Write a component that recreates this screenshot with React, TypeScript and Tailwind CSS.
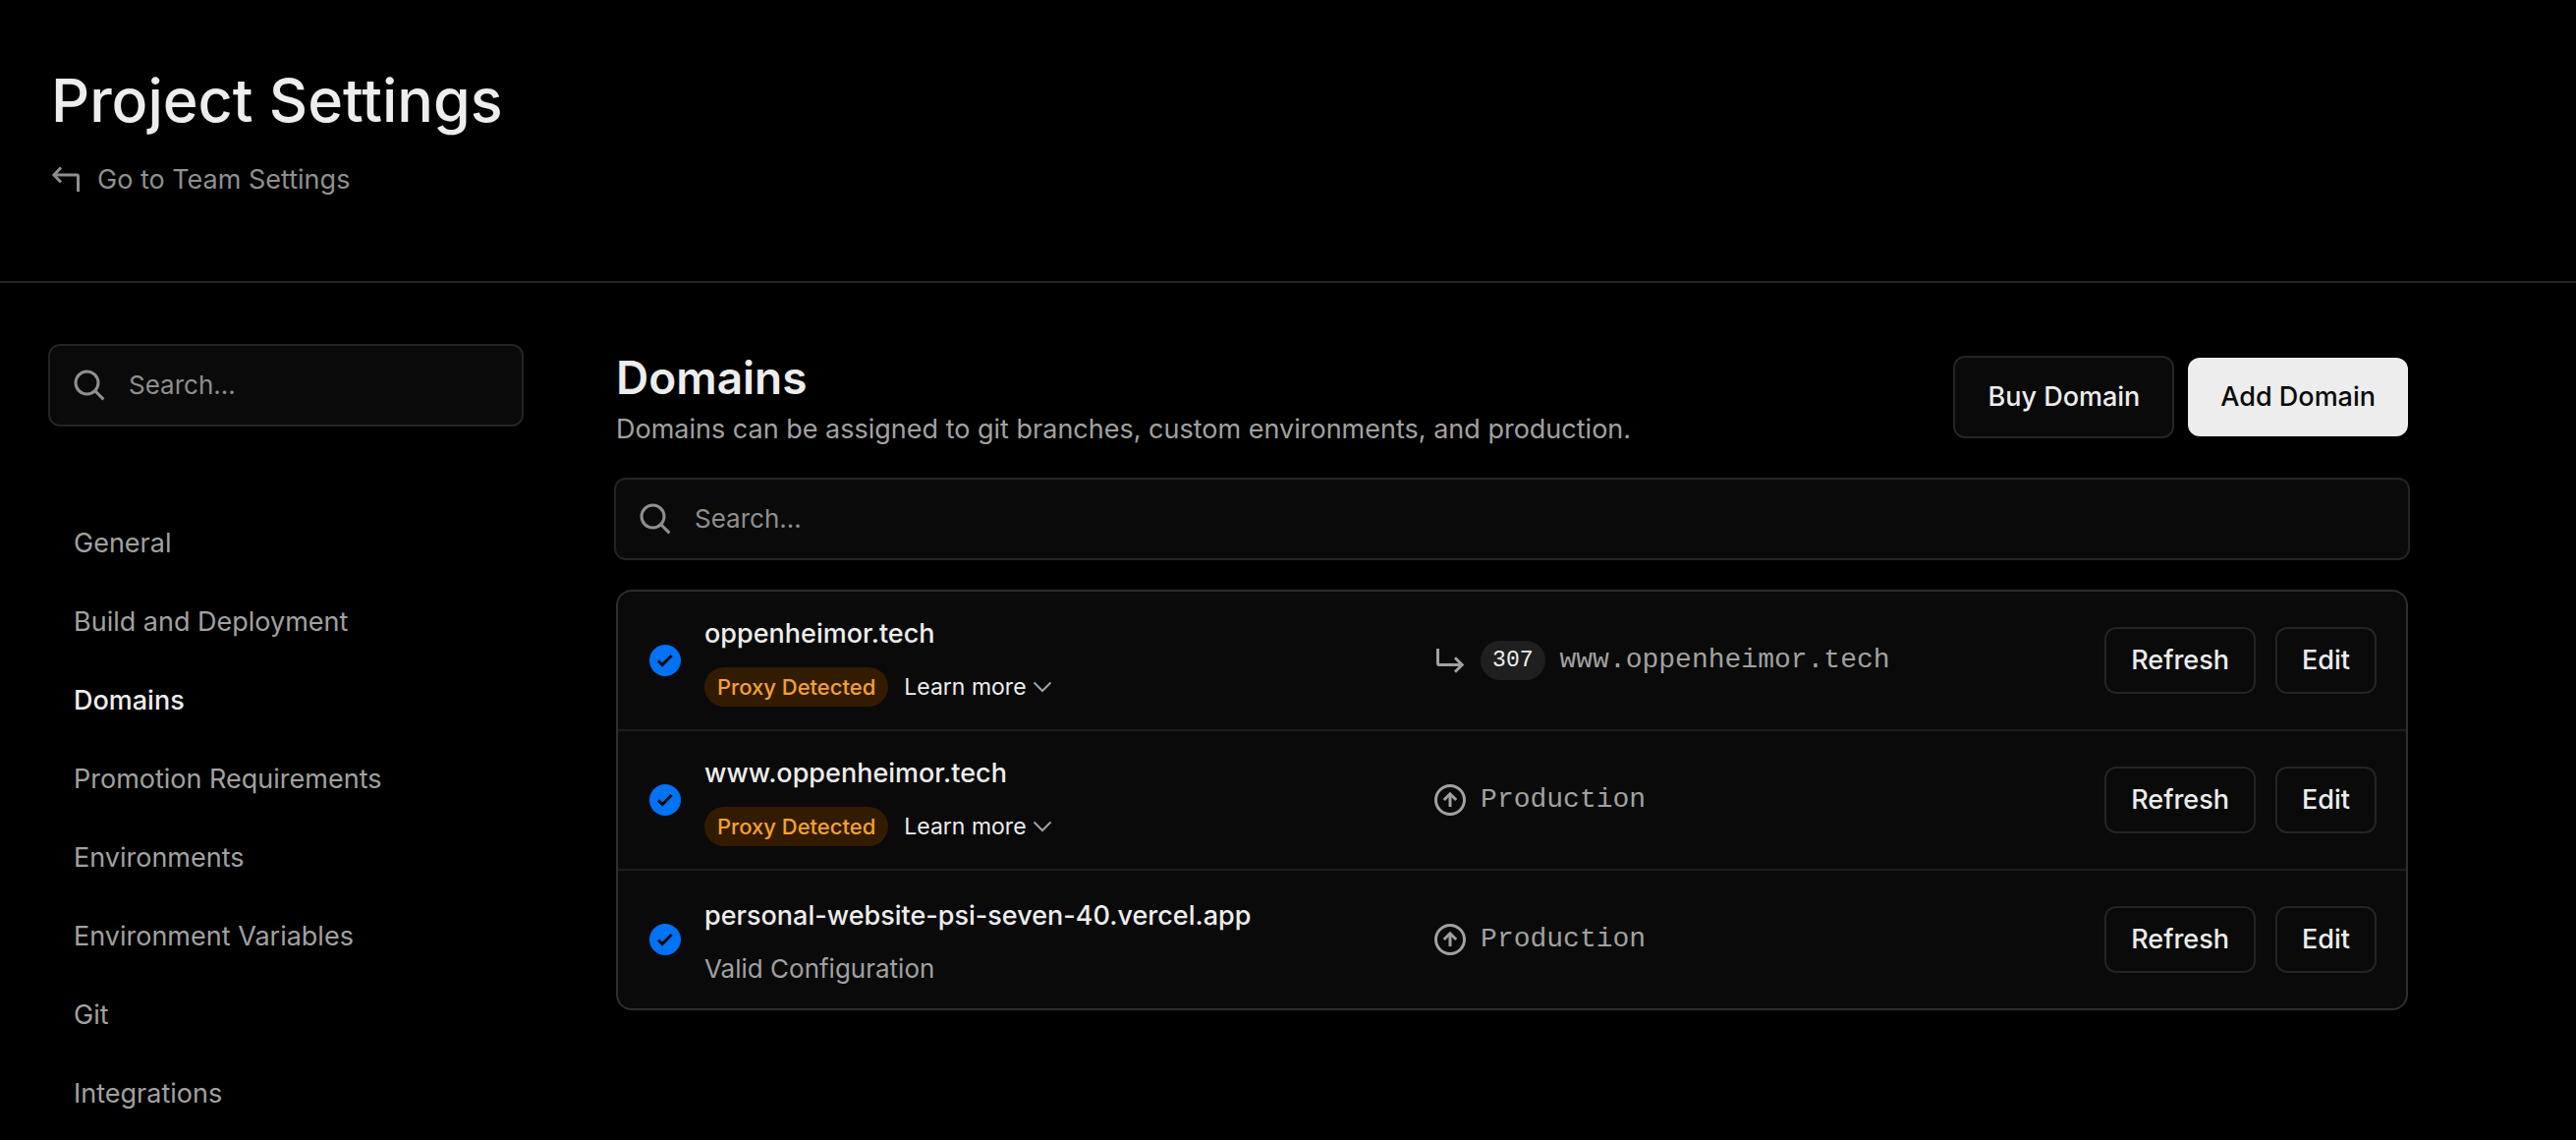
import { useId } from "react";

const navItems = [
  "General",
  "Build and Deployment",
  "Domains",
  "Promotion Requirements",
  "Environments",
  "Environment Variables",
  "Git",
  "Integrations",
];

type Domain = {
  name: string;
  proxied: boolean;
  redirect?: { code: string; target: string };
};

const domains: Domain[] = [
  {
    name: "oppenheimor.tech",
    proxied: true,
    redirect: { code: "307", target: "www.oppenheimor.tech" },
  },
  { name: "www.oppenheimor.tech", proxied: true },
  { name: "personal-website-psi-seven-40.vercel.app", proxied: false },
];

function SearchIcon() {
  return (
    <svg className="size-8 shrink-0 text-[#8f8f8f]" viewBox="0 0 16 16" fill="none" stroke="currentColor" strokeWidth="1.5" aria-hidden="true">
      <circle cx="6.75" cy="6.75" r="5.75" />
      <path d="M10.9 10.9L15.2 15.2" />
    </svg>
  );
}

function ReturnIcon() {
  return (
    <svg className="size-8 shrink-0" viewBox="0 0 32 32" fill="none" stroke="currentColor" strokeWidth="3" aria-hidden="true">
      <path d="M10 3.500L3 11L10 18.500" />
      <path d="M3.500 11H26Q27.500 11 27.500 12.500V28" />
    </svg>
  );
}

function RedirectIcon() {
  return (
    <svg className="size-8 shrink-0" viewBox="0 0 32 32" fill="none" stroke="currentColor" strokeWidth="3" aria-hidden="true">
      <path d="M3.500 4V19Q3.500 20.500 5 20.500H28" />
      <path d="M21 13.300L28.200 20.500L21 27.700" />
    </svg>
  );
}

function ProductionIcon() {
  return (
    <svg className="size-8 shrink-0" viewBox="0 0 16 16" fill="none" stroke="currentColor" strokeWidth="1.5" aria-hidden="true">
      <circle cx="8" cy="8" r="7.250" />
      <path d="M8 11.500V5" />
      <path d="M4.900 8L8 4.900L11.100 8" />
    </svg>
  );
}

function CheckIcon() {
  return (
    <svg className="size-8 shrink-0" viewBox="0 0 16 16" fill="none" aria-hidden="true">
      <circle cx="8" cy="8" r="8" fill="#0072f5" />
      <path d="M4.500 8.200L6.600 10.300L11.300 5.500" stroke="#0a0a0a" strokeWidth="1.500" />
    </svg>
  );
}

function ChevronDown() {
  return (
    <svg className="h-3 w-5 shrink-0 text-[#a1a1a1]" viewBox="0 0 20 12" fill="none" stroke="currentColor" strokeWidth="2" aria-hidden="true">
      <path d="M1.500 1.500L10 10L18.500 1.500" />
    </svg>
  );
}

function SearchField({ label }: { label: string }) {
  const id = useId();
  return (
    <div className="flex h-[84px] items-center gap-6 rounded-xl border-2 border-[#242424] bg-[#0a0a0a] px-6">
      <label htmlFor={id} aria-label={label}>
        <SearchIcon />
      </label>
      <input
        id={id}
        type="text"
        placeholder="Search…"
        className="min-w-0 flex-1 bg-transparent text-[26px] leading-10 text-[#ededed] outline-none placeholder:text-[#8f8f8f]"
      />
    </div>
  );
}

function DomainRow({ domain }: { domain: Domain }) {
  return (
    <li className="grid h-[142px] grid-cols-[5fr_6fr] items-center border-b-2 border-[#1f1f1f] pr-[30px] pl-8 last:h-[140px] last:border-b-0">
      <div className="flex items-center gap-6">
        <CheckIcon />
        {domain.proxied ? (
          <div className="flex flex-col items-start gap-[14px]">
            <span className="text-[27px] leading-10 font-medium text-[#ededed]">{domain.name}</span>
            <div className="flex items-center gap-4">
              <span className="rounded-full bg-[#331b00] px-[13px] text-[22px] leading-10 font-medium text-[#f2a131]">Proxy Detected</span>
              <button type="button" className="flex items-center gap-1.5 text-[23px] leading-10 text-[#ededed]">
                Learn more
                <ChevronDown />
              </button>
            </div>
          </div>
        ) : (
          <div className="flex flex-col items-start gap-[14px] pt-1.5">
            <span className="text-[27px] leading-10 font-medium text-[#ededed]">{domain.name}</span>
            <span className="text-[26px] leading-10 text-[#a1a1a1]">Valid Configuration</span>
          </div>
        )}
      </div>
      <div className="flex items-center justify-between">
        <div className="flex items-center gap-[15px] font-['Liberation_Mono',monospace] text-[28px] leading-10 text-[#a1a1a1]">
          {domain.redirect ? (
            <>
              <RedirectIcon />
              <span className="rounded-full bg-[#1f1f1f] px-3 text-[23px] leading-10 text-[#ededed]">{domain.redirect.code}</span>
              <span>{domain.redirect.target}</span>
            </>
          ) : (
            <>
              <ProductionIcon />
              <span>Production</span>
            </>
          )}
        </div>
        <div className="flex gap-5">
          <button type="button" className="h-[68px] rounded-xl border-2 border-[#242424] px-[25px] text-[27px] font-medium text-[#ededed]">Refresh</button>
          <button type="button" className="h-[68px] rounded-xl border-2 border-[#242424] px-[25px] text-[27px] font-medium text-[#ededed]">Edit</button>
        </div>
      </div>
    </li>
  );
}

export default function App() {
  return (
    <div className="min-h-screen bg-black font-['Inter',sans-serif] text-[#ededed]">
      <header className="border-b-2 border-[#242424] px-[52px] pt-[62px] pb-[83px]">
        <h1 className="text-[61px] leading-20 font-medium">Project Settings</h1>
        <a href="#team" className="mt-[21px] flex w-fit items-center gap-[15px] text-[27px] leading-10 text-[#8f8f8f]">
          <ReturnIcon />
          Go to Team Settings
        </a>
      </header>

      <div className="flex gap-[92px] pt-[62px] pr-[169px] pl-[49px]">
        <aside className="w-[484px] shrink-0">
          <SearchField label="Search settings" />
          <nav className="mt-[79px] px-[26px]">
            <ul>
              {navItems.map((item) => (
                <li key={item}>
                  <a
                    href={"#" + item.toLowerCase().replaceAll(" ", "-")}
                    className={
                      item === "Domains"
                        ? "block text-[27px] leading-20 font-medium text-[#ededed]"
                        : "block text-[27px] leading-20 text-[#a1a1a1]"
                    }
                  >
                    {item}
                  </a>
                </li>
              ))}
            </ul>
          </nav>
        </aside>

        <main className="min-w-0 flex-1">
          <div className="flex items-start justify-between px-0.5">
            <div className="pt-1.5">
              <h2 className="text-[46px] leading-14 font-semibold">Domains</h2>
              <p className="text-[27px] leading-[50px] text-[#a1a1a1]">
                Domains can be assigned to git branches, custom environments, and production.
              </p>
            </div>
            <div className="flex items-center gap-[14px] pt-3">
              <button type="button" className="h-[84px] rounded-xl border-2 border-[#242424] bg-[#0a0a0a] px-[33px] text-[27px] font-medium text-[#ededed]">Buy Domain</button>
              <button type="button" className="h-20 rounded-xl bg-[#ededed] px-[33px] text-[27px] font-medium text-[#0a0a0a]">Add Domain</button>
            </div>
          </div>

          <div className="mt-6">
            <SearchField label="Search domains" />
          </div>

          <ul className="mx-0.5 mt-[30px] rounded-2xl border-2 border-[#2e2e2e] bg-[#0a0a0a]">
            {domains.map((domain) => (
              <DomainRow key={domain.name} domain={domain} />
            ))}
          </ul>
        </main>
      </div>
    </div>
  );
}
